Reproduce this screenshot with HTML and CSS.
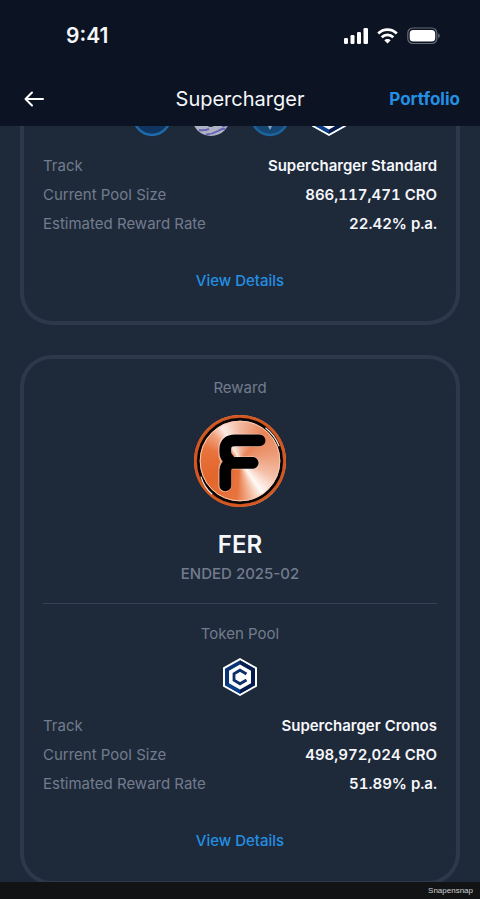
FILE: index.html
```html
<!DOCTYPE html>
<html lang="en">
<head>
    <meta charset="UTF-8">
    <meta name="viewport" content="width=device-width, initial-scale=1.0">
    <title>Supercharger</title>
    <link rel="stylesheet" href="styles.css">
</head>
<body>
    <!-- Shared token icon -->
    <svg class="defs" width="0" height="0" aria-hidden="true">
        <symbol id="cro" viewBox="0 0 40 40">
            <path d="M20 1 37 10.500V29.500L20 39 3 29.500V10.500Z" fill="#fff"/>
            <path d="M20 3.300 35 11.700V28.300L20 36.700 5 28.300V11.700Z" fill="#0a3475"/>
            <path d="M20 3.300 35 11.700 30 14.500 20 9Z" fill="#061d50"/>
            <path d="M35 11.700V28.300L20 36.700V31L30 25.500V14.500Z" fill="#041b4c"/>
            <path d="M5 28.300 20 36.700V31L10 25.500Z" fill="#0b3f87"/>
            <path d="M20 7.500 31 13.800V26.200L20 32.500 9 26.200V13.800Z" fill="#fff"/>
            <path d="M26.500 17 20 13.200 14 16.700V23.300L20 26.800 26.500 23" fill="none" stroke="#0a2f6b" stroke-width="2.800"/>
        </symbol>
    </svg>

    <header class="header">
        <div class="status-bar">
            <span class="time">9:41</span>
            <div class="status-icons">
                <svg width="24" height="16" viewBox="0 0 24 16" fill="#fff" aria-hidden="true">
                    <rect x="0" y="10" width="4" height="6" rx="1.200"/>
                    <rect x="6.500" y="7" width="4" height="9" rx="1.200"/>
                    <rect x="13" y="4" width="4" height="12" rx="1.200"/>
                    <rect x="19.500" y="0" width="4.500" height="16" rx="1.200"/>
                </svg>
                <svg width="21" height="16" viewBox="0 0 21 16" fill="none" stroke="#fff" stroke-width="2.800" aria-hidden="true">
                    <path d="M1.200 5.500C6.500.3 14.500.3 19.800 5.500"/>
                    <path d="M4.700 9.300C8 6.100 13 6.100 16.300 9.300"/>
                    <path d="M7.300 12.300C9 10.500 12 10.500 13.700 12.300L10.500 15.600Z" fill="#fff" stroke="none"/>
                </svg>
                <svg width="33" height="18" viewBox="0 0 33 18" aria-hidden="true">
                    <rect x=".8" y="1" width="29" height="15.500" rx="5" fill="none" stroke="#666c78" stroke-width="1.200"/>
                    <rect x="2.700" y="3" width="25.500" height="11.500" rx="3.500" fill="#fff"/>
                    <path d="M31.200 6.200V11.300Q32.800 10.500 32.800 8.800T31.200 6.200Z" fill="#666c78"/>
                </svg>
            </div>
        </div>
        <nav class="nav-bar">
            <button class="back" type="button" aria-label="Back">
                <svg width="20" height="16" viewBox="0 0 20 16" fill="none" stroke="#fff" stroke-width="2" stroke-linecap="round" stroke-linejoin="round" aria-hidden="true">
                    <path d="M19 8H1.500M8 1.500 1.500 8 8 14.500"/>
                </svg>
            </button>
            <h1>Supercharger</h1>
            <a class="portfolio" href="#portfolio">Portfolio</a>
        </nav>
    </header>

    <main class="content">
        <section class="card card-scrolled">
            <div class="pool">
                <svg viewBox="0 0 40 40" aria-hidden="true">
                    <circle cx="20" cy="20" r="18" fill="#0f3560" stroke="#1e6aaa" stroke-width="2.500"/>
                </svg>
                <svg viewBox="0 0 40 40" aria-hidden="true">
                    <circle cx="20" cy="20" r="19" fill="#aeb3c3"/>
                    <path d="M14 27Q20 33 25 27Z" fill="#1e293a"/>
                    <path d="M8 33Q13 34 18 32M15 37.500Q22 37 27 34T34 32M31 29.500 37 28" fill="none" stroke="#6862b5" stroke-width="2"/>
                </svg>
                <svg viewBox="0 0 40 40" aria-hidden="true">
                    <circle cx="20" cy="20" r="18" fill="#164774" stroke="#1d639d" stroke-width="2.500"/>
                    <path d="M17 27 20 33 23 27Z" fill="#8ea6bd"/>
                </svg>
                <svg aria-hidden="true"><use href="#cro"/></svg>
            </div>
            <dl class="details">
                <div><dt>Track</dt><dd>Supercharger Standard</dd></div>
                <div><dt>Current Pool Size</dt><dd>866,117,471 CRO</dd></div>
                <div><dt>Estimated Reward Rate</dt><dd>22.42% p.a.</dd></div>
            </dl>
            <a class="view" href="#standard">View Details</a>
        </section>

        <section class="card">
            <p class="label">Reward</p>
            <div class="coin">
                <svg viewBox="0 0 94 94" role="img" aria-label="FER">
                    <circle cx="47" cy="47" r="45.500" fill="none" stroke="#d5571f" stroke-width="3"/>
                    <circle cx="47" cy="47" r="42.600" fill="none" stroke="#0b0604" stroke-width="3"/>
                    <path d="M73 13Q83 21 87 32M7 63Q10.500 74 18.500 81" fill="none" stroke="#f8eee8" stroke-width="1.200"/>
                    <circle cx="47" cy="47" r="40.700" fill="none" stroke="#f8cdb7" stroke-width="1"/>
                    <g fill="none" stroke-linecap="round" stroke-linejoin="round">
                        <path d="M66 26H41Q31.500 26 31.500 34V39Q31.500 44 35 48Q31.500 51 31.500 57V72M60 49H37" stroke="#fff" stroke-opacity=".4" stroke-width="13.500"/>
                        <path d="M67 26H42Q32 26 32 35V38Q32 43 37 47M60 49H40Q32 49 32 58V72" stroke="#000" stroke-width="12"/>
                    </g>
                </svg>
            </div>
            <h2>FER</h2>
            <p class="label ended">ENDED 2025-02</p>
            <hr>
            <p class="label">Token Pool</p>
            <div class="pool">
                <svg aria-hidden="true"><use href="#cro"/></svg>
            </div>
            <dl class="details">
                <div><dt>Track</dt><dd>Supercharger Cronos</dd></div>
                <div><dt>Current Pool Size</dt><dd>498,972,024 CRO</dd></div>
                <div><dt>Estimated Reward Rate</dt><dd>51.89% p.a.</dd></div>
            </dl>
            <a class="view" href="#cronos">View Details</a>
        </section>
    </main>

    <footer class="footer">Snapensnap</footer>
</body>
</html>
```

FILE: styles.css
```css
* {
    box-sizing: border-box;
}
body {
    margin: 0;
    height: 100vh;
    display: flex;
    flex-direction: column;
    overflow: hidden;
    background: #1e293a;
    color: #f5f7fa;
    font-family: Inter, "Liberation Sans", sans-serif;
    font-size: 15px;
    line-height: 22px;
}
h1, h2, p, dl, dd {
    margin: 0;
}
a {
    color: #2490e3;
    text-decoration: none;
}
.defs {
    display: none;
}

/* Header */
.header {
    flex: none;
    background: #0c1323;
}
.status-bar {
    display: flex;
    align-items: center;
    justify-content: space-between;
    height: 72px;
    padding: 0 40px 0 66px;
}
.time {
    font-size: 21px;
    font-weight: 600;
}
.status-icons {
    display: flex;
    align-items: center;
    gap: 9px;
}
.nav-bar {
    display: grid;
    grid-template-columns: 1fr auto 1fr;
    align-items: center;
    height: 54px;
    padding: 0 20px;
}
.back {
    display: flex;
    justify-self: start;
    padding: 4px;
    border: 0;
    background: none;
    cursor: pointer;
}
.nav-bar h1 {
    font-size: 20px;
    font-weight: 400;
}
.portfolio {
    justify-self: end;
    font-size: 17px;
    font-weight: 700;
}

/* Cards */
.content {
    flex: 1;
    min-height: 0;
    overflow: hidden;
    padding: 0 20px;
}
.card {
    display: flex;
    flex-direction: column;
    align-items: center;
    margin-bottom: 30px;
    padding: 18px 19px 29px;
    border: 4px solid #2d384a;
    border-radius: 32px;
}
.card-scrolled {
    padding-top: 0;
    border-top: 0;
    border-radius: 0 0 32px 32px;
}
.card-scrolled .pool {
    margin-top: -29px;
}
.label {
    color: #727c8d;
}
.ended {
    margin-top: 3px;
    font-weight: 500;
}
.coin {
    width: 94px;
    height: 94px;
    margin: 15px 0 22px;
    padding: 1px;
    border-radius: 50%;
    background: conic-gradient(#f2b8a0, #e98457 40deg, #ec9872 75deg, #f4c0a8 115deg, #fffaf7 145deg, #f6c3aa 160deg, #e7743f 185deg, #e2662c 240deg, #e8733c 290deg, #f0a17e 315deg, #fbeae3 332deg, #f2b8a0) content-box;
}
.coin svg {
    display: block;
}
.card h2 {
    font-size: 24px;
    font-weight: 600;
    line-height: 30px;
}
.card hr {
    width: 100%;
    height: 1px;
    margin: 18px 0 19px;
    border: 0;
    background: #364153;
}
.pool {
    display: flex;
    gap: 19px;
    margin: 12px 0 18px;
}
.pool svg {
    width: 40px;
    height: 40px;
}
.details {
    display: flex;
    flex-direction: column;
    gap: 7px;
    width: 100%;
}
.details div {
    display: flex;
    justify-content: space-between;
}
.details dt {
    color: #727c8d;
}
.details dd {
    font-weight: 600;
    font-variant-numeric: tabular-nums;
}
.view {
    margin-top: 35px;
    font-weight: 500;
}

.footer {
    flex: none;
    padding: 0 7px;
    background: #121314;
    color: #d0d0d0;
    font-family: "Liberation Sans", sans-serif;
    font-size: 8px;
    line-height: 17px;
    text-align: right;
}
```
